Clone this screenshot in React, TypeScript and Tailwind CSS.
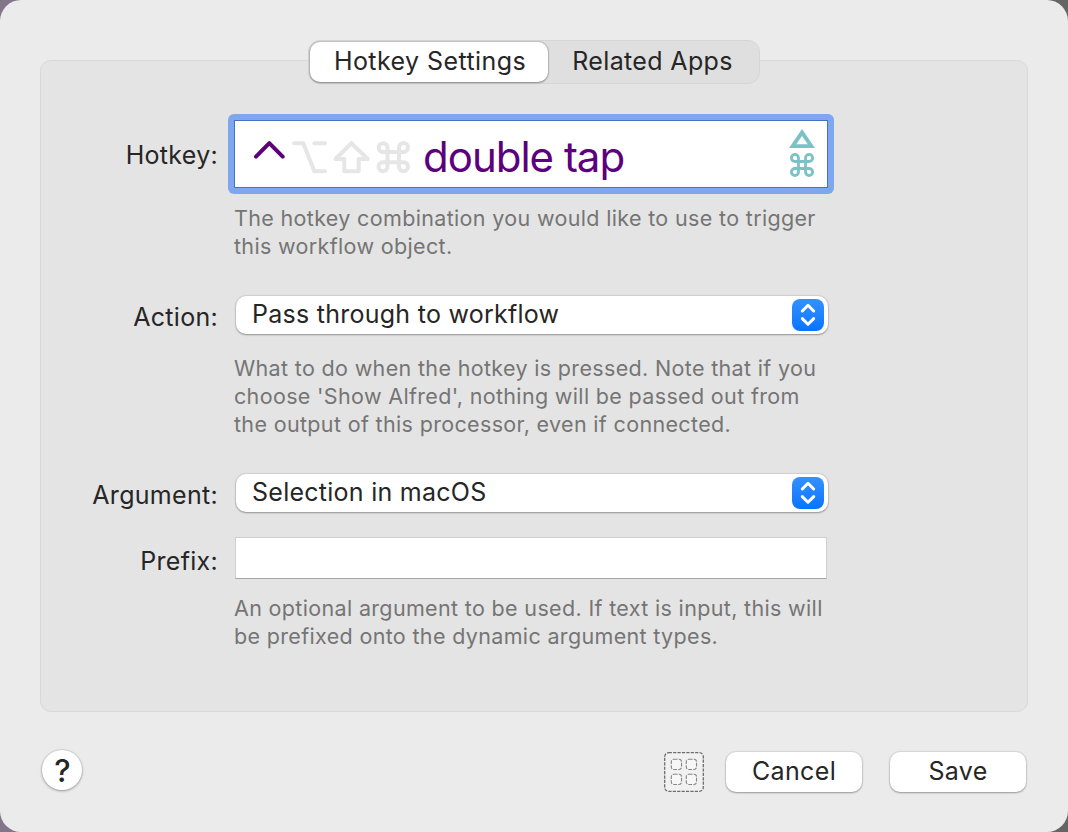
import type { ReactNode } from "react";

function CommandGlyph({ className, weight }: { className: string; weight: number }) {
  return (
    <svg className={className} viewBox="0 0 34 34" fill="none" stroke="currentColor" strokeWidth={weight}>
      <path d="M12 12H7a5 5 0 1 1 5-5v20a5 5 0 1 1-5-5h20a5 5 0 1 1-5 5V7a5 5 0 1 1 5 5H12" />
    </svg>
  );
}

function Modifiers() {
  return (
    <svg
      className="h-[36px] w-[160px] shrink-0"
      viewBox="252 138 160 36"
      fill="none"
      strokeWidth="4"
      strokeLinecap="round"
      strokeLinejoin="round"
    >
      <path stroke="#5c007e" d="M256 155.7 269.3 142.2 282.7 155.7" />
      <g stroke="#e6e6e6">
        <path d="M294 142.2H303.3L314.3 170.2H325M314.3 142.2H325" />
        <path d="M351.5 142.2 335.5 158H344.3V170.2H358.7V158H367.7Z" />
        <path d="M387.5 151h-4.7a4.4 4.4 0 1 1 4.7-4.5v19.4a4.5 4.5 0 1 1-4.7-4.7h21a4.5 4.5 0 1 1-4.8 4.7v-19.4a4.5 4.5 0 1 1 4.8 4.5H387.5" />
      </g>
    </svg>
  );
}

function Label({ children, className }: { children: ReactNode; className: string }) {
  return <span className={`w-[177px] shrink-0 text-right text-[25px] leading-[30px] tracking-[0.3px] ${className}`}>{children}</span>;
}

function Help({ lines, className }: { lines: string[]; className: string }) {
  return (
    <div className={`ml-[193px] text-[21.5px] leading-[28px] tracking-[0.34px] text-[#757575] ${className}`}>
      {lines.map((l) => (
        <p key={l} className="whitespace-nowrap">{l}</p>
      ))}
    </div>
  );
}

function Select({ value }: { value: string }) {
  return (
    <div className="ml-[18px] flex h-[38px] w-[592px] items-center justify-between rounded-[10px] bg-white pr-1 pl-[16px] shadow-[0_0_1px_1px_rgba(0,0,0,0.08),0_1px_2px_rgba(0,0,0,0.3)]">
      <span className="-mt-[3px] text-[25px] leading-[30px] tracking-[0.26px]">{value}</span>
      <span className="flex size-8 items-center justify-center rounded-[8px] bg-linear-to-b from-[#3391ff] to-[#0474ff]">
        <svg className="size-8" viewBox="0 0 32 32" fill="none" stroke="white" strokeWidth="3" strokeLinecap="round" strokeLinejoin="round">
          <path d="M10.3 12 16 6.3 21.7 12M10.3 19.6 16 25.3 21.7 19.6" />
        </svg>
      </span>
    </div>
  );
}

function PushButton({ children }: { children: ReactNode }) {
  return (
    <button className="h-10 w-[136px] rounded-[10px] bg-white pb-0.5 text-[25px] leading-[30px] tracking-[0.35px] shadow-[0_0_1px_1px_rgba(0,0,0,0.08),0_1px_2px_rgba(0,0,0,0.3)]">
      {children}
    </button>
  );
}

export default function App() {
  return (
    <div className="h-[832px] w-[1068px] bg-linear-to-r from-[#83758a] to-[#656565] font-['Inter',sans-serif] text-[#262626]">
      <div className="flex h-full flex-col overflow-hidden rounded-[21px] bg-[#ebebeb] px-10 pt-[60px]">
        <section className="flex h-[652px] shrink-0 flex-col rounded-[11px] border border-[#d8d8d8] bg-[#e4e4e4]">
          <nav className="-mt-[21px] ml-[267px] flex h-11 w-[452px] items-center rounded-[12px] border border-[#d6d6d6] bg-[#dfdfdf] pl-px text-[25px] leading-[30px]">
            <button className="h-10 w-[238px] rounded-[10px] bg-white pb-0.5 pl-0.5 tracking-[0.42px] shadow-[0_0_1px_1px_rgba(0,0,0,0.13),0_1px_2px_rgba(0,0,0,0.3)]">
              Hotkey Settings
            </button>
            <button className="h-10 flex-1 pr-0.5 pb-0.5 tracking-[0.35px]">Related Apps</button>
          </nav>

          <div className="mt-[30px] flex items-center">
            <Label className="pt-0.5">Hotkey:</Label>
            <div className="ml-[10px] h-20 w-[606px] rounded-[6px] bg-[#7fa7f0] p-1.5">
              <div className="flex h-[68px] items-center border border-[#4773be] bg-white pr-[12px] pl-[17px]">
                <div className="flex items-center pt-[5px]">
                  <Modifiers />
                  <span className="ml-[11px] text-[42px] leading-[50px] tracking-[-1px] whitespace-nowrap text-[#5c007e]">
                    double tap
                  </span>
                </div>
                <div className="ml-auto flex flex-col items-center pb-0.5 text-[#7bc2c7]">
                  <svg className="h-[19px] w-[26px]" viewBox="0 0 26 19">
                    <path fill="currentColor" fillRule="evenodd" d="M13 0 26 19H0ZM13 7 7.3 15.2H18.7Z" />
                  </svg>
                  <CommandGlyph className="mt-[5px] size-6" weight={4} />
                </div>
              </div>
            </div>
          </div>
          <Help className="mt-[10px]" lines={["The hotkey combination you would like to use to trigger", "this workflow object."]} />

          <div className="mt-[36px] flex items-center">
            <Label className="pt-[3px]">Action:</Label>
            <Select value="Pass through to workflow" />
          </div>
          <Help
            className="mt-[20px]"
            lines={[
              "What to do when the hotkey is pressed. Note that if you",
              "choose 'Show Alfred', nothing will be passed out from",
              "the output of this processor, even if connected.",
            ]}
          />

          <div className="mt-[36px] flex items-center">
            <Label className="pt-[3px]">Argument:</Label>
            <Select value="Selection in macOS" />
          </div>
          <div className="mt-[25px] flex items-center">
            <Label className="pt-[6px]">Prefix:</Label>
            <input className="ml-[17px] h-[42px] w-[592px] border border-[#cfcfcf] border-b-[#a5a5a5] bg-white px-3 text-[25px] outline-none" aria-label="Prefix" />
          </div>
          <Help className="mt-[15px]" lines={["An optional argument to be used. If text is input, this will", "be prefixed onto the dynamic argument types."]} />
        </section>

        <footer className="mt-[40px] flex items-center pr-[2px] pl-[2px]">
          <button className="-mt-1 flex size-10 items-center justify-center rounded-full bg-white pl-px text-[31px] leading-none font-[450] shadow-[0_0_1px_1px_rgba(0,0,0,0.08),0_1px_3px_rgba(0,0,0,0.3)]">
            ?
          </button>
          <svg className="ml-auto size-10" viewBox="0 0 40 40" fill="none" stroke="#6c6c6c">
            <rect x="0.7" y="0.7" width="38.6" height="38.6" rx="4" fill="#f1f1f1" strokeWidth="1.3" strokeDasharray="3.2 1.2" />
            <g fill="#f7f7f7" stroke="#858585" strokeWidth="1.1" strokeDasharray="3.8 1.2">
              <rect x="7.3" y="7.3" width="10.2" height="10.2" rx="2.5" />
              <rect x="22.3" y="7.3" width="10.2" height="10.2" rx="2.5" />
              <rect x="7.3" y="22.3" width="10.2" height="10.2" rx="2.5" />
              <rect x="22.3" y="22.3" width="10.2" height="10.2" rx="2.5" />
            </g>
          </svg>
          <div className="ml-[22px] flex gap-7">
            <PushButton>Cancel</PushButton>
            <PushButton>Save</PushButton>
          </div>
        </footer>
      </div>
    </div>
  );
}
